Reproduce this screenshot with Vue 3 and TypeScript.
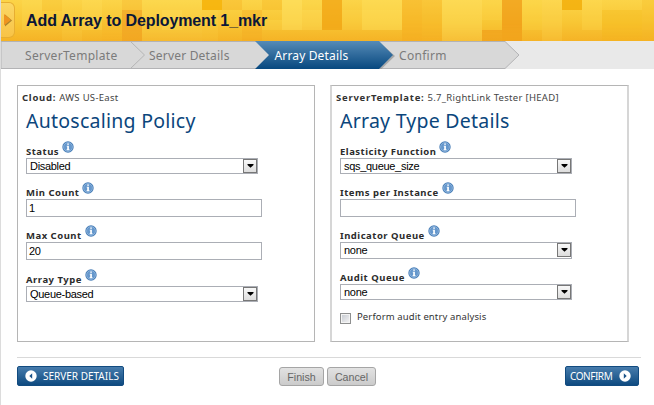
<script setup lang="ts">
interface Field {
  id: string
  label: string
  kind: 'select' | 'input'
  value: string
}
interface Panel {
  id: string
  caption: string
  source: string
  title: string
  fields: Field[]
  check?: string
}

const panels: Panel[] = [
  {
    id: 'policy',
    caption: 'Cloud:',
    source: 'AWS US-East',
    title: 'Autoscaling Policy',
    fields: [
      { id: 'status', label: 'Status', kind: 'select', value: 'Disabled' },
      { id: 'min', label: 'Min Count', kind: 'input', value: '1' },
      { id: 'max', label: 'Max Count', kind: 'input', value: '20' },
      { id: 'type', label: 'Array Type', kind: 'select', value: 'Queue-based' },
    ],
  },
  {
    id: 'details',
    caption: 'ServerTemplate:',
    source: '5.7_RightLink Tester [HEAD]',
    title: 'Array Type Details',
    fields: [
      { id: 'elasticity', label: 'Elasticity Function', kind: 'select', value: 'sqs_queue_size' },
      { id: 'items', label: 'Items per Instance', kind: 'input', value: '' },
      { id: 'indicator', label: 'Indicator Queue', kind: 'select', value: 'none' },
      { id: 'audit', label: 'Audit Queue', kind: 'select', value: 'none' },
    ],
    check: 'Perform audit entry analysis',
  },
]

const steps = ['ServerTemplate', 'Server Details', 'Array Details', 'Confirm']

// Mosaic tiles of the header: x, y, width, height, colour, opacity
const tiles: [number, number, number, number, string, number][] = [
  [22, 0, 20, 30, '#ffe565', 0.2], [42, 0, 20, 11, '#f6b51d', 0.2], [62, 10, 20, 31, '#ffe565', 0.15],
  [82, 0, 20, 30, '#ffe565', 0.25], [102, 20, 20, 21, '#f7a81d', 0.15], [122, 0, 20, 10, '#f3a01c', 0.2],
  [122, 10, 20, 31, '#ee8d18', 0.45], [142, 0, 60, 41, '#ffe76a', 0.18], [162, 10, 20, 20, '#ffe76a', 0.2],
  [202, 0, 20, 10, '#f5ae00', 0.75], [202, 10, 16, 31, '#ffdc50', 0.2], [222, 0, 20, 10, '#f5a91c', 0.3],
  [242, 10, 20, 31, '#f29c19', 0.25], [262, 0, 20, 10, '#f4ae1a', 0.3], [262, 20, 20, 10, '#ffe565', 0.2],
  [282, 0, 20, 30, '#ffe66a', 0.45], [302, 10, 20, 20, '#ffe66a', 0.3], [302, 0, 20, 10, '#ffdf57', 0.2],
  [322, 0, 20, 30, '#f1a10f', 0.7], [342, 10, 60, 20, '#ffe05d', 0.15], [362, 0, 40, 30, '#ffe565', 0.35],
  [402, 0, 20, 41, '#f4a616', 0.4], [422, 0, 20, 41, '#f4a616', 0.28], [442, 0, 40, 41, '#ffe66a', 0.35],
  [482, 0, 20, 20, '#ffdc51', 0.2], [482, 30, 20, 11, '#ee9615', 0.6], [502, 0, 20, 41, '#ee9411', 0.65],
  [522, 0, 20, 30, '#ffdf50', 0.2], [542, 0, 20, 41, '#ffe163', 0.25], [562, 0, 20, 10, '#f3ad08', 0.8],
  [582, 0, 20, 30, '#ffe05a', 0.25], [602, 10, 40, 31, '#f6b20e', 0.28], [642, 0, 12, 41, '#f5b015', 0.2],
]
</script>

<template>
  <div class="page">
    <header class="banner">
      <svg class="mosaic" width="654" height="41" shape-rendering="crispEdges">
        <rect v-for="(t, i) in tiles" :key="i" :x="t[0]" :y="t[1]" :width="t[2]" :height="t[3]" :fill="t[4]" :opacity="t[5]" />
      </svg>
      <span class="handle">
        <svg width="10" height="14" viewBox="0 0 10 14"><path d="M2 1.500 9 7.500 2 13.500z" fill="#a9822c" /><path d="M1 1 8 7 1 12.500z" fill="#ee941f" /></svg>
      </span>
      <h1>Add Array to Deployment 1_mkr</h1>
    </header>
    <nav class="steps">
      <svg class="shapes" width="653" height="28" viewBox="0 0 653 28">
        <defs>
          <linearGradient id="blue" x1="0" y1="0" x2="0" y2="1"><stop offset="0" stop-color="#568bb7" /><stop offset="1" stop-color="#07487f" /></linearGradient>
        </defs>
        <path d="M0 .5H504L518 14 504 27.500H0z" fill="#d8d8d8" stroke="#b3b3b5" />
        <path d="M129.500 .5 143.500 14 129.500 27.500" fill="none" stroke="#b5b5b5" />
        <path d="M378 2 392.500 15 379 28" fill="none" stroke="#888" stroke-width="2" opacity=".6" />
        <path d="M254 0H378L392 14 378 28H254L268 14z" fill="url(#blue)" />
      </svg>
      <span v-for="(s, i) in steps" :key="s" class="step" :class="['s' + i, { active: i === 2 }]">{{ s }}</span>
    </nav>
    <main>
      <section v-for="p in panels" :key="p.id" class="panel" :class="p.id">
        <p class="caption"><b>{{ p.caption }}</b><span>{{ p.source }}</span></p>
        <h2>{{ p.title }}</h2>
        <div v-for="f in p.fields" :key="f.id" class="field" :class="'f-' + f.id">
          <div class="label">
            <span>{{ f.label }}</span>
            <svg width="12" height="12" viewBox="0 0 12 12">
              <circle cx="6" cy="6" r="5.700" fill="#4a7fb8" /><circle cx="6" cy="6" r="4.400" fill="#6597cc" stroke="#94b9df" stroke-width=".8" />
              <path d="M5.200 2.500h1.700v1.300H5.200zM4.700 4.700h2.200v3.600h.6v.9H4.600v-.9h.6V5.600h-.5z" fill="#fff" />
            </svg>
          </div>
          <div class="control" :class="f.kind">
            <span>{{ f.value }}</span>
            <i v-if="f.kind === 'select'" class="drop"><svg width="7" height="4"><path d="M.5 0h6v1L3.500 3.800 .5 1z" fill="#000" /></svg></i>
          </div>
        </div>
        <div v-if="p.check" class="check"><i></i><span>{{ p.check }}</span></div>
      </section>
    </main>
    <footer>
      <button class="primary back">
        <svg width="12" height="12"><circle cx="6" cy="6" r="5.700" fill="#fff" /><path d="M7.200 3.300v5.400L4.300 6z" fill="#1a5288" /></svg>
        <span>SERVER DETAILS</span>
      </button>
      <button class="plain finish">Finish</button>
      <button class="plain cancel">Cancel</button>
      <button class="primary next">
        <span>CONFIRM</span>
        <svg width="12" height="12"><circle cx="6" cy="6" r="5.700" fill="#fff" /><path d="M4.800 3.300v5.400L7.700 6z" fill="#1a5288" /></svg>
      </button>
    </footer>
  </div>
</template>

<style>
body { background: #fff; overflow: hidden; }
</style>

<style scoped>
* { box-sizing: border-box; margin: 0; padding: 0; }
.page { width: 654px; height: 405px; border-left: 1px solid #dcdcdc; background: #fff; font-family: "Noto Sans", sans-serif; color: #333; white-space: nowrap; overflow: hidden; }
.banner { position: relative; height: 41px; display: flex; align-items: center; background: linear-gradient(#fcd448, #f8c634 55%, #f5b326); }
.mosaic { position: absolute; left: -1px; top: 0; -webkit-mask-image: linear-gradient(#000, #000 60%, rgba(0, 0, 0, .7)); }
.handle { position: relative; width: 14px; height: 36px; border: 1px solid #e7ae31; border-left: 0; border-radius: 0 6px 6px 0; background: linear-gradient(#fbd765, #f8c346); display: flex; align-items: center; padding-left: 2px; margin-top: -1px; }
h1 { position: relative; margin-left: 11px; font: bold 16px/20px "Liberation Sans", sans-serif; letter-spacing: -.1px; color: #0b1738; }
.steps { position: relative; height: 28px; background: #e9e9e9; display: flex; font-size: 12px; line-height: 29px; color: #7b7b7b; }
.shapes { position: absolute; left: 0; top: 0; }
.step { position: relative; }
.s0 { margin-left: 24px; width: 124px; letter-spacing: .3px; }
.s1 { width: 125.500px; letter-spacing: .2px; }
.s2 { width: 124.500px; letter-spacing: .15px; }
.s3 { letter-spacing: .3px; }
.active { color: #fff; }
main { display: flex; gap: 15px; padding: 16px 0 0 16px; }
.panel { width: 298px; height: 257px; border: 1px solid #b5b5b5; padding: 5px 0 0 8px; }
.details { width: 299px; border-left: 2px solid #d6d6d6; border-right: 2px solid #d6d6d6; }
.caption { height: 14px; margin-left: -4px; font-size: 9.500px; line-height: 13px; color: #444; display: flex; gap: 3px; letter-spacing: .3px; }
.caption b { color: #333; letter-spacing: .75px; }
h2 { height: 36px; font-weight: 400; font-size: 19.500px; line-height: 32px; letter-spacing: .25px; color: #0b467c; }
.label { height: 17px; display: flex; font-weight: 700; font-size: 9.500px; line-height: 21px; color: #2c2c2c; letter-spacing: .5px; gap: 3px; }
.control { border: 1px solid #abaeb5; background: #fff; font: 11px/15px "Liberation Sans", sans-serif; letter-spacing: -.3px; color: #000; }
.input { width: 236px; height: 18px; padding: 1px 0 0 2px; margin-bottom: 8px; }
.select { display: flex; justify-content: space-between; width: 232px; height: 16px; padding-left: 3px; margin-bottom: 8px; }
.f-max .input { margin-bottom: 9px; }
.f-indicator .select { height: 17px; }
.drop { width: 14px; height: 14px; border: 1px solid #777; background: linear-gradient(#f8f8f8, #ddd); display: flex; align-items: center; justify-content: center; }
.check { display: flex; align-items: center; padding-top: 2px; font-size: 9.500px; line-height: 14px; gap: 6px; letter-spacing: .12px; }
.check i { width: 11px; height: 11px; border: 1px solid #8e8f8f; box-shadow: inset 0 0 0 1px #f4f4f4; background: linear-gradient(135deg, #c4c8cf, #f6f6f6); margin-top: 3px; }
footer { display: flex; align-items: flex-start; width: 624px; margin: 15px 0 0 16px; border-top: 1px solid #d9d9d9; padding: 8px 2px 0 0; }
button { font-family: inherit; }
.primary { height: 20px; border: 1px solid #124b80; border-radius: 2px; background: linear-gradient(#477cac, #0e4a80); color: #fff; display: flex; align-items: center; font-family: "Noto Sans", sans-serif; font-size: 10px; line-height: 16px; }
.back { width: 107px; padding-left: 7px; gap: 6px; }
.next { width: 74px; margin-left: auto; padding-left: 4px; gap: 7px; letter-spacing: -.45px; }
.plain { height: 19px; margin-top: 1px; border: 1px solid #a5a5a5; border-radius: 3px; background: linear-gradient(#e2e2e2, #cbcbcb); color: #666; font-family: "Liberation Sans", sans-serif; font-size: 10.670px; }
.finish { width: 45px; margin-left: 155px; }
.cancel { width: 49px; margin-left: 3px; }
</style>
